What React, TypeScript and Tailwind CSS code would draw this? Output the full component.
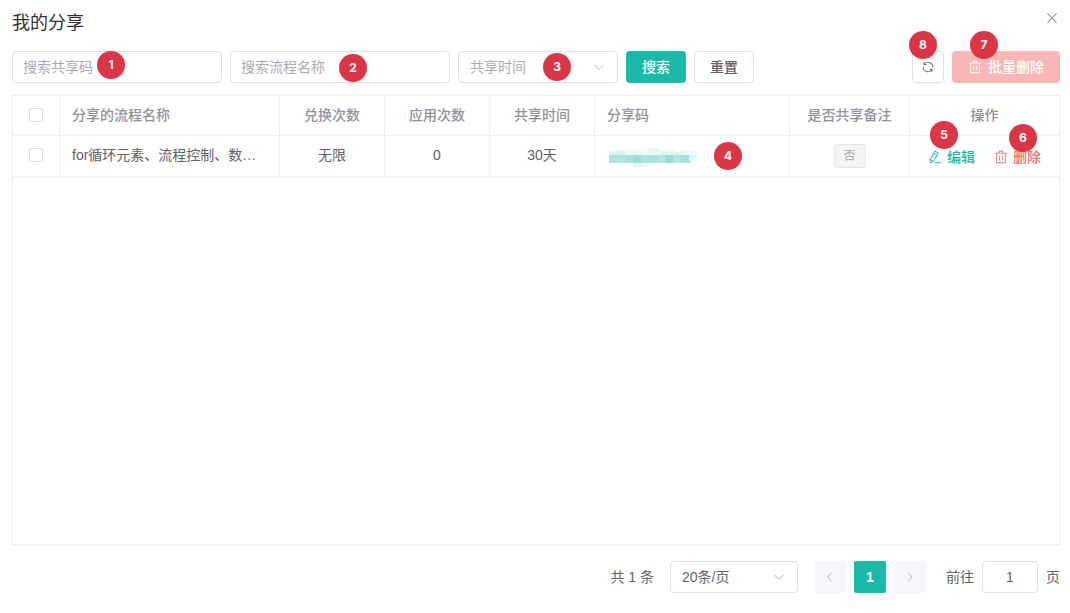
import React from 'react';

const ICONS = {
  close: 'M764.288 214.592 512 466.88 259.712 214.592a31.936 31.936 0 0 0-45.12 45.12L466.752 512 214.528 764.224a31.936 31.936 0 1 0 45.12 45.184L512 557.184l252.288 252.288a31.936 31.936 0 0 0 45.12-45.12L557.12 512.064l252.288-252.352a31.936 31.936 0 1 0-45.12-45.184z',
  down: 'M831.872 340.864 512 652.672 192.128 340.864a30.592 30.592 0 0 0-42.752 0 29.12 29.12 0 0 0 0 41.6L489.664 714.24a32 32 0 0 0 44.672 0l340.288-331.712a29.12 29.12 0 0 0 0-41.728 30.592 30.592 0 0 0-42.752 0z',
  left: 'M609.408 149.376 277.76 489.6a32 32 0 0 0 0 44.672l331.648 340.352a29.12 29.12 0 0 0 41.728 0 30.592 30.592 0 0 0 0-42.752L339.264 511.936l311.872-319.872a30.592 30.592 0 0 0 0-42.688 29.12 29.12 0 0 0-41.728 0z',
  right: 'M340.864 149.312a30.592 30.592 0 0 0 0 42.752L652.736 512 340.864 831.872a30.592 30.592 0 0 0 0 42.752 29.12 29.12 0 0 0 41.728 0L714.24 534.336a32 32 0 0 0 0-44.672L382.592 149.376a29.12 29.12 0 0 0-41.728 0z',
  refresh: 'M771.776 794.88A384 384 0 0 1 128 512h64a320 320 0 0 0 555.712 216.448H654.72a32 32 0 1 1 0-64h149.056a32 32 0 0 1 32 32v148.928a32 32 0 1 1-64 0v-50.56zM276.288 295.616h92.992a32 32 0 0 1 0 64H220.16a32 32 0 0 1-32-32V178.56a32 32 0 0 1 64 0v50.56A384 384 0 0 1 896.128 512h-64a320 320 0 0 0-555.776-216.384z',
  trash: 'M160 256H96a32 32 0 0 1 0-64h256V95.936a32 32 0 0 1 32-32h256a32 32 0 0 1 32 32V192h256a32 32 0 1 1 0 64h-64v672a32 32 0 0 1-32 32H192a32 32 0 0 1-32-32V256zm448-64v-64H416v64h192zM224 896h576V256H224v640zm192-128a32 32 0 0 1-32-32V416a32 32 0 0 1 64 0v320a32 32 0 0 1-32 32zm192 0a32 32 0 0 1-32-32V416a32 32 0 0 1 64 0v320a32 32 0 0 1-32 32z',
  pen: 'm199.04 672.64 193.984 112 224-387.968-193.92-112-224 388.032zm-23.872 60.16 32.896 148.288 144.896-45.696L175.168 732.8zM455.04 229.248l193.92 112 56.704-98.112-193.984-112-56.64 98.112zM104.32 708.8l384-665.024 304.768 175.936L409.152 884.8h.064l-248.448 78.336L104.32 708.8zm384 254.272v-64h448v64h-448z',
};

const Icon: React.FC<{ name: keyof typeof ICONS; className?: string }> = ({ name, className = 'size-3.5' }) => (
  <svg viewBox="0 0 1024 1024" fill="currentColor" className={`shrink-0 ${className}`}>
    <path d={ICONS[name]} />
  </svg>
);

// numbered marker that floats over the control it explains
const Marker: React.FC<{ n: number; className: string }> = ({ n, className }) => (
  <span
    className={`absolute z-10 flex size-7 items-center justify-center rounded-full bg-[#dc3545] font-['Inter',sans-serif] text-xs leading-none font-bold text-white ${className}`}
  >
    {n}
  </span>
);

const Checkbox = () => <span className="size-3.5 rounded-[1px] border border-[#dcdfe6] bg-white" />;

// [x, y, width, height, color]
const MOSAIC: [number, number, number, number, string][] = [
  [0, 4, 8, 4, '#ddf4f1'],
  [8, 3, 8, 5, '#d8f3ef'],
  [16, 2, 8, 6, '#f0faf9'],
  [24, 2, 5, 6, '#ecf9f7'],
  [28, 1, 12, 7, '#f6fcfb'],
  [40, 1, 8, 7, '#eaf8f6'],
  [48, 1, 3, 7, '#e7f7f5'],
  [51, 4, 15, 4, '#e2f5f3'],
  [66, 5, 6, 3, '#dcf4f0'],
  [72, 4, 8, 4, '#e8f8f6'],
  [80, 3, 8, 5, '#effaf8'],
  [0, 8, 8, 8, '#ace5de'],
  [8, 8, 8, 8, '#b0e7e0'],
  [16, 8, 8, 8, '#a9e5dd'],
  [24, 8, 8, 8, '#98dfd6'],
  [32, 8, 8, 8, '#aae5dd'],
  [40, 8, 8, 8, '#a6e3db'],
  [48, 8, 8, 8, '#b7e9e3'],
  [56, 8, 8, 8, '#96dfd5'],
  [64, 8, 8, 8, '#b3e8e1'],
  [72, 8, 8, 8, '#a4e3db'],
  [80, 8, 5, 5, '#dcf4f1'],
  [85, 8, 3, 3, '#dcf4f1'],
  [24, 16, 8, 4, '#def4f1'],
  [32, 16, 8, 4, '#eefaf8'],
  [80, 14, 1, 1, '#2b9f92'],
];

const COLS = 'grid grid-cols-[47px_220px_105px_105px_105px_195px_120px_149px] border-b border-[#ebeef5]';
const CELL = 'flex min-w-0 items-center border-r border-[#ebeef5] px-3 pb-0.5';
const MID = `${CELL} justify-center`;
const FIELD = 'relative flex h-8 items-center rounded border border-[#dcdfe6] bg-white';

export default function App() {
  return (
    <div className="flex h-[613px] w-[1070px] flex-col overflow-hidden bg-white pr-2.5 pl-3 font-['Liberation_Sans','Noto_Sans_CJK_SC',sans-serif] text-sm text-[#606266]">
      <header className="flex h-[51px] items-start justify-between pt-2.5">
        <h1 className="mt-px text-lg leading-6 text-[#303133]">我的分享</h1>
        <Icon name="close" className="size-4 text-[#909399]" />
      </header>

      <div className="flex h-8 gap-2">
        <div className={`${FIELD} w-[210px] px-2.5 text-[#a8abb2]`}>
          搜索共享码
          <Marker n={1} className="top-[-1px] left-[84px]" />
        </div>
        <div className={`${FIELD} w-[220px] px-2.5 text-[#a8abb2]`}>
          搜索流程名称
          <Marker n={2} className="top-[2px] left-[108px]" />
        </div>
        <div className={`${FIELD} w-40 justify-between px-[11px] text-[#a8abb2]`}>
          共享时间
          <Icon name="down" className="size-3.5 text-[#b9bcc3]" />
          <Marker n={3} className="top-[1px] left-[84px]" />
        </div>
        <button className="h-8 w-15 rounded bg-[#1ab9a8] font-medium text-white">搜索</button>
        <button className="h-8 w-15 rounded border border-[#dcdfe6] font-medium">重置</button>
        <button className={`${FIELD} ml-auto w-8 justify-center`}>
          <Icon name="refresh" />
          <Marker n={8} className="top-[-21px] left-[-4px]" />
        </button>
        <button className="relative flex h-8 w-[108px] items-center justify-center gap-1.5 rounded bg-[#fab6b6] font-medium text-white">
          <Icon name="trash" />
          批量删除
          <Marker n={7} className="top-[-20px] left-[18px]" />
        </button>
      </div>

      <div className="mt-3 h-[450px] w-[1048px] border border-[#ebeef5]">
        <div className={`${COLS} h-10 font-medium text-[#909399]`}>
          <div className={MID}><Checkbox /></div>
          <div className={CELL}>分享的流程名称</div>
          <div className={MID}>兑换次数</div>
          <div className={MID}>应用次数</div>
          <div className={MID}>共享时间</div>
          <div className={CELL}>分享码</div>
          <div className={MID}>是否共享备注</div>
          <div className="flex items-center justify-center pb-0.5">操作</div>
        </div>
        <div className={`${COLS} h-[41px]`}>
          <div className={MID}><Checkbox /></div>
          <div className={CELL}>for循环元素、流程控制、数…</div>
          <div className={MID}>无限</div>
          <div className={MID}>0</div>
          <div className={MID}>30天</div>
          <div className={`${CELL} relative`}>
            <svg width="90" height="20" shapeRendering="crispEdges" className="mt-1 ml-0.5">
              {MOSAIC.map(([x, y, w, h, fill], i) => (
                <rect key={i} x={x} y={y} width={w} height={h} fill={fill} />
              ))}
            </svg>
            <Marker n={4} className="top-1.5 left-[119px]" />
          </div>
          <div className="flex items-center justify-center border-r border-[#ebeef5]">
            <span className="flex h-6 w-8 items-center justify-center rounded-[3px] border border-[#e4e7ed] bg-[#f4f4f5] text-xs text-[#a8abb2]">
              否
            </span>
          </div>
          <div className="relative flex items-center gap-[18px] pt-px pl-[18px] font-medium">
            <span className="flex items-center gap-[5px] text-[#1ab9a8]">
              <Icon name="pen" />
              编辑
            </span>
            <span className="ml-px flex items-center gap-[5px] text-[#f56c6c]">
              <Icon name="trash" />
              删除
            </span>
            <Marker n={5} className="top-[-15px] left-[20px]" />
            <Marker n={6} className="top-[-12px] left-[99px]" />
          </div>
        </div>
      </div>

      <footer className="mt-4 flex h-8 items-center justify-end">
        <span className="mr-4">共 1 条</span>
        <div className={`${FIELD} mr-4 w-32 justify-between pr-[11px] pl-[11px]`}>
          20条/页
          <Icon name="down" className="size-3.5 text-[#b9bcc3]" />
        </div>
        <button className="mr-2 flex size-8 items-center justify-center rounded-xs bg-[#f5f7fa] text-[#a8abb2]">
          <Icon name="left" className="size-3" />
        </button>
        <button className="mr-2 flex size-8 items-center justify-center rounded-xs bg-[#1ab9a8] font-bold text-white">1</button>
        <button className="mr-5 flex size-8 items-center justify-center rounded-xs bg-[#f5f7fa] text-[#a8abb2]">
          <Icon name="right" className="size-3" />
        </button>
        <span>前往</span>
        <div className={`${FIELD} mx-2 w-14 justify-center`}>1</div>
        <span>页</span>
      </footer>
    </div>
  );
}
